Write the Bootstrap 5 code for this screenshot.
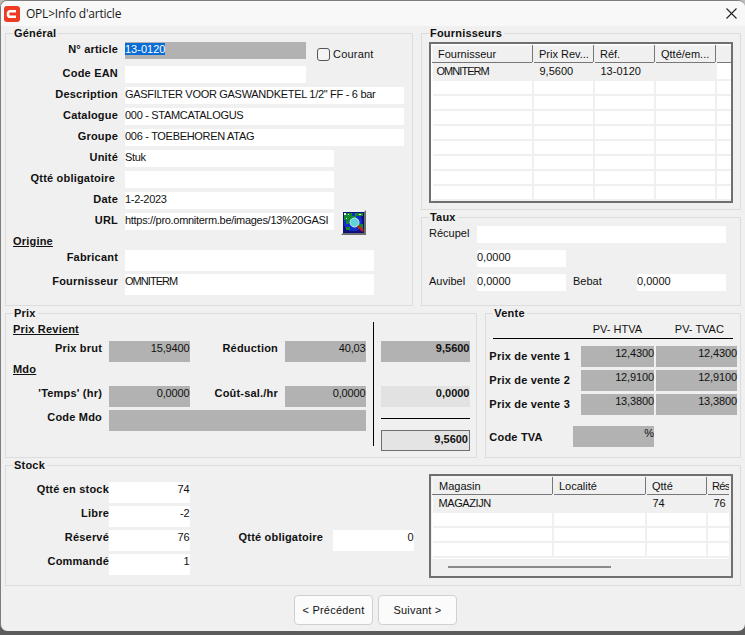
<!DOCTYPE html>
<html lang="fr">
<head>
<meta charset="UTF-8">
<meta name="viewport" content="width=device-width, initial-scale=1.0">
<title>OPL&gt;Info d'article</title>
<link href="https://cdn.jsdelivr.net/npm/bootstrap@5.3.1/dist/css/bootstrap.min.css" rel="stylesheet">
<style>
html, body { height: 100%; }
body { background: linear-gradient(#bdbdbd 0 30px, #5c5c5c 30px); font: 11px/14px "Liberation Sans", Arial, sans-serif; color: #111; overflow: hidden; }
.win { width: 745px; height: 631px; background: #f0f0f0; border: solid #7d7d7d; border-width: 1px 0 0 1px; border-radius: 7px; overflow: hidden; }
.titlebar { height: 25px; background: #f8f8f8; padding-left: 3px; }
.titlebar .ttl { font: 12px/16px "Open Sans", "Liberation Sans", sans-serif; letter-spacing: -.22px; margin-left: 6px; color: #1a1a1a; }
.closex { margin-right: 8px; }
.body-in { padding-left: 4px; }
.grp { border: 1px solid #dcdcdc; margin: 0; padding: 0 7px; }
.grp legend { float: none; width: auto; font: bold 11px/14px "Liberation Sans", sans-serif; letter-spacing: .2px; padding: 0 2px 0 1px; margin: 0; }
.g-gen { width: 408px; height: 280px; }
.g-four { width: 320px; height: 184px; }
.g-taux { width: 320px; height: 96px; }
.g-prix { width: 473px; height: 152px; }
.g-vente { width: 256px; height: 152px; padding: 0 3px; }
.g-vente legend { margin-left: 4px; }
.g-stock { width: 736px; height: 128px; }
.top-row { width: 736px; column-gap: 8px; }
.lbl { font-weight: bold; letter-spacing: .2px; white-space: nowrap; text-align: right; }
.fld { height: 17px; background: #fff; white-space: nowrap; overflow: hidden; line-height: 15px; flex: none; letter-spacing: -.3px; }
.fld.keep { letter-spacing: 0; }
.tall { height: 21px; }
.gris { background: #b2b2b2; }
.num { text-align: right; padding-right: .5px; letter-spacing: -.15px; }
.tight { letter-spacing: -.95px; }
.tight2 { letter-spacing: -.4px; }
.gen-lbl { width: 105px; margin-right: 7px; flex: none; }
.gen-lbl.trail { padding-right: 3px; }
.gen-row { margin-top: 4px; }
.gen-first { margin-top: 2px; height: 17px; }
.gen-ean { margin-top: 7px; }
.w181 { width: 181px; }
.w209 { width: 209px; }
.w249 { width: 249px; }
.w279 { width: 279px; }
.w89 { width: 89px; }
.w81 { width: 81px; }
.w73 { width: 73px; }
.w257 { width: 257px; }
.selt { background: #0a6cd6; color: #fff; letter-spacing: 0; }
.chk.form-check-input { width: 13px; height: 13px; margin: 6px 3px 0 11px; border: 1px solid #555; border-radius: 3px; background-color: #f4f4f4; flex: none; }
.chk-txt { margin-top: 5px; letter-spacing: .2px; }
.urlbtn { width: 25px; height: 25px; margin: -3px 0 -5px 7px; flex: none; background: #d9d9d9; border: 2px solid; border-color: #f2f2f2 #6e6e6e #6e6e6e #f2f2f2; display: block; }
.sect { font-weight: bold; text-decoration: underline; letter-spacing: .2px; }
.origine { margin-top: 4px; }
.fab-row { margin-top: 2px; }
.listbox { border: 2px solid #6f6f6f; background: #fff; overflow: hidden; }
.lb-four { width: 304px; height: 161px; margin-top: 2px; padding: 1px; }
.lb-stock { width: 304px; height: 104px; padding: 1px; margin-left: 15px; margin-top: 2px; background: #f0f0f0; }
.lb-scrollarea { height: 82px; overflow: hidden; margin-right: 1px; background: #fff; }
.gridt { border-collapse: collapse; table-layout: fixed; }
.gridt-four { width: 288px; }
.gridt-stock { width: 297px; }
.c100 { width: 100px; }
.c120 { width: 120px; }
.c93 { width: 93px; }
.c61 { width: 61px; }
.c23 { width: 23px; }
.c35 { width: 35px; }
.gridt th { height: 17px; font-weight: normal; padding: 0 0 0 6px; background: #f0f0f0; border: 1px solid; border-color: #f8f8f8 #777 #777 #f8f8f8; white-space: nowrap; overflow: hidden; }
.gridt td { height: 15px; line-height: 1px; padding: 0 0 0 6px; border-right: 2px solid #f0f0f0; border-bottom: 2px solid #f0f0f0; white-space: nowrap; }
.gridt tr.hl td { height: 17px; line-height: 14px; background: #f0f0f0; border-color: #f0f0f0; }
.gridt-four tr.hl td:last-child { background: #fff; }
.gridt-four th:first-child { padding-left: 5px; }
.gridt-four td:first-child { padding-left: 4px; }
.gridt-stock th:last-child { border-right: 0; padding-left: 5px; letter-spacing: -.7px; }
.gridt-stock td:last-child { border-right: 0; }
.hscroll { height: 19px; background: #f0f0f0; padding: 7px 0 0 16px; }
.hthumb { width: 163px; height: 2px; background: #8a8a8a; }
.prix-left { width: 353px; flex: none; }
.prix-sect { margin-top: 2px; }
.prix-row { margin-top: 5px; }
.prix-row2 { margin-top: 10px; }
.plbl1 { width: 96px; padding-right: 7px; }
.plbl2 { width: 95px; padding-right: 7px; }
.vline { width: 1px; height: 124px; margin: 2px 7px 0 7px; background: #000; flex: none; }
.prix-right { padding-top: 21px; }
.bold-r { font-weight: bold; letter-spacing: 0; }
.pale { background: #e2e2e2; margin-top: 24px; }
.hr-blk { height: 1px; background: #000; margin-top: 11px; }
.total { height: 21px; width: 89px; margin-top: 11px; background: #e4e4e4; border: 1px solid #6f6f6f; line-height: 17px; padding-right: 1px; text-align: right; font-weight: bold; }
.vhead { width: 240px; height: 17px; border-bottom: 1px solid #000; margin: 2px 0 0 4px; }
.vspace { width: 83px; flex: none; }
.vcol { text-align: center; width: 82px; line-height: 14px; flex: none; }
.vlbl { width: 92px; line-height: 21px; flex: none; }
.vrow { margin-top: 3px; }
.vfirst { margin-top: 7px; }
.vgap { margin-left: 2px; }
.vtva { margin-top: 11px; }
.vtva-lbl { width: 84px; line-height: 22px; flex: none; }
.taux-lbl { width: 48px; flex: none; }
.taux-first { margin-top: 2px; }
.taux-row { margin-top: 7px; }
.bebat { width: 64px; margin-left: 7px; flex: none; }
.stock-grid { display: grid; grid-template-columns: 96px 81px 133px 91px; row-gap: 3px; margin-top: 10px; align-content: start; }
.stock-grid .lbl { line-height: 15px; }
.st-right { margin-left: 10px; }
.btn-wiz { width: 79px; height: 30px; padding: 0; font: 11px "Liberation Sans", sans-serif; letter-spacing: .2px; background: #fbfbfb; border: 1px solid #d0d0d0; border-radius: 4px; color: #111; }
.foot { margin-top: 9px; gap: 5px; width: 741px; }
</style>
</head>
<body>
<div class="win">
  <div class="titlebar d-flex align-items-center">
    <svg width="16" height="16" viewBox="0 0 16 16">
      <rect width="16" height="16" rx="3" fill="#ee3b24"/>
      <path d="M12 5.2H6.4C5 5.2 4 6.2 4 7.6v.8c0 1.4 1 2.4 2.4 2.4H12" fill="none" stroke="#fff" stroke-width="2.6"/>
    </svg>
    <span class="ttl">OPL&gt;Info d'article</span>
    <svg class="ms-auto closex" width="11" height="11" viewBox="0 0 11 11"><path d="M.5.5l10 10M10.5.5l-10 10" stroke="#222" stroke-width="1.1" fill="none"/></svg>
  </div>

  <div class="body-in">
    <div class="d-flex top-row">
      <fieldset class="grp g-gen">
        <legend>Général</legend>
        <div class="d-flex gen-first">
          <div class="lbl gen-lbl">N° article</div>
          <div class="fld gris w181"><span class="selt">13-0120</span></div>
          <input class="form-check-input chk" type="checkbox" aria-label="Courant">
          <span class="chk-txt">Courant</span>
        </div>
        <div class="d-flex gen-ean"><div class="lbl gen-lbl">Code EAN</div><div class="fld w181"></div></div>
        <div class="d-flex gen-row"><div class="lbl gen-lbl">Description</div><div class="fld w279">GASFILTER VOOR GASWANDKETEL 1/2" FF - 6 bar</div></div>
        <div class="d-flex gen-row"><div class="lbl gen-lbl">Catalogue</div><div class="fld w279">000 - STAMCATALOGUS</div></div>
        <div class="d-flex gen-row"><div class="lbl gen-lbl">Groupe</div><div class="fld w279">006 - TOEBEHOREN ATAG</div></div>
        <div class="d-flex gen-row"><div class="lbl gen-lbl">Unité</div><div class="fld w209">Stuk</div></div>
        <div class="d-flex gen-row"><div class="lbl gen-lbl trail">Qtté obligatoire</div><div class="fld w209"></div></div>
        <div class="d-flex gen-row"><div class="lbl gen-lbl">Date</div><div class="fld w209">1-2-2023</div></div>
        <div class="d-flex gen-row">
          <div class="lbl gen-lbl">URL</div>
          <div class="fld w209">https://pro.omniterm.be/images/13%20GASI</div>
          <svg class="urlbtn" viewBox="0 0 21 21" shape-rendering="crispEdges">
            <rect width="21" height="21" fill="#10107a"/>
            <circle cx="10" cy="10" r="9.5" fill="#1230c8"/>
            <path d="M1 1h8v3h4v2H9v3H6v3H3V8H1zM12 1h8v3h-8zM15 12h5v5h-5zM3 15h4v3H3z" fill="#128a30"/>
            <path d="M1 1h2v2H1zM5 2h1v1H5zM16 2h2v1h-2zM3 6h1v1H3z" fill="#eee"/>
            <circle cx="11.5" cy="10.5" r="4.5" fill="#5fd4d8" stroke="#c8f0f0" stroke-width="1" shape-rendering="auto"/>
            <path d="M15 14l5 5" stroke="#d81818" stroke-width="2.4" shape-rendering="auto"/>
          </svg>
        </div>
        <div class="sect origine">Origine</div>
        <div class="d-flex fab-row"><div class="lbl gen-lbl">Fabricant</div><div class="fld tall w249"></div></div>
        <div class="d-flex vrow"><div class="lbl gen-lbl">Fournisseur</div><div class="fld tall w249 tight">OMNITERM</div></div>
      </fieldset>

      <div class="d-flex flex-column">
        <fieldset class="grp g-four">
          <legend>Fournisseurs</legend>
          <div class="listbox lb-four">
            <table class="gridt gridt-four">
              <colgroup><col class="c100"><col class="c61"><col class="c61"><col class="c61"><col class="c35"></colgroup>
              <thead><tr><th>Fournisseur</th><th>Prix Rev...</th><th>Réf.</th><th>Qtté/em...</th><th></th></tr></thead>
              <tbody>
                <tr class="hl"><td class="tight">OMNITERM</td><td>9,5600</td><td>13-0120</td><td></td><td></td></tr>
                <tr><td></td><td></td><td></td><td></td><td></td></tr>
                <tr><td></td><td></td><td></td><td></td><td></td></tr>
                <tr><td></td><td></td><td></td><td></td><td></td></tr>
                <tr><td></td><td></td><td></td><td></td><td></td></tr>
                <tr><td></td><td></td><td></td><td></td><td></td></tr>
                <tr><td></td><td></td><td></td><td></td><td></td></tr>
                <tr><td></td><td></td><td></td><td></td><td></td></tr>
                <tr><td></td><td></td><td></td><td></td><td></td></tr>
                <tr><td></td><td></td><td></td><td></td><td></td></tr>
              </tbody>
            </table>
          </div>
        </fieldset>
        <fieldset class="grp g-taux">
          <legend>Taux</legend>
          <div class="d-flex taux-first"><div class="taux-lbl">Récupel</div><div class="fld w249"></div></div>
          <div class="d-flex taux-row"><div class="taux-lbl"></div><div class="fld w89 keep">0,0000</div></div>
          <div class="d-flex taux-row">
            <div class="taux-lbl">Auvibel</div><div class="fld w89 keep">0,0000</div>
            <div class="bebat">Bebat</div><div class="fld w89 keep">0,0000</div>
          </div>
        </fieldset>
      </div>
    </div>

    <div class="d-flex top-row">
      <fieldset class="grp g-prix">
        <legend>Prix</legend>
        <div class="d-flex">
          <div class="prix-left">
            <div class="sect prix-sect">Prix Revient</div>
            <div class="d-flex prix-row">
              <div class="lbl plbl1">Prix brut</div>
              <div class="fld tall gris num w81">15,9400</div>
              <div class="lbl plbl2">Réduction</div>
              <div class="fld tall gris num w81">40,03</div>
            </div>
            <div class="sect">Mdo</div>
            <div class="d-flex prix-row2">
              <div class="lbl plbl1">'Temps' (hr)</div>
              <div class="fld tall gris num w81">0,0000</div>
              <div class="lbl plbl2">Coût-sal./hr</div>
              <div class="fld tall gris num w81">0,0000</div>
            </div>
            <div class="d-flex vrow">
              <div class="lbl plbl1">Code Mdo</div>
              <div class="fld tall gris w257"></div>
            </div>
          </div>
          <div class="vline"></div>
          <div class="w89 prix-right">
            <div class="fld tall gris num bold-r">9,5600</div>
            <div class="fld tall pale num bold-r">0,0000</div>
            <div class="hr-blk"></div>
            <div class="total">9,5600</div>
          </div>
        </div>
      </fieldset>

      <fieldset class="grp g-vente">
        <legend>Vente</legend>
        <div class="vhead d-flex"><div class="vspace"></div><div class="vcol">PV- HTVA</div><div class="vcol">PV- TVAC</div></div>
        <div class="d-flex vfirst"><div class="lbl text-start vlbl">Prix de vente 1</div><div class="fld tall gris num w73">12,4300</div><div class="fld tall gris num w81 vgap">12,4300</div></div>
        <div class="d-flex vrow"><div class="lbl text-start vlbl">Prix de vente 2</div><div class="fld tall gris num w73">12,9100</div><div class="fld tall gris num w81 vgap">12,9100</div></div>
        <div class="d-flex vrow"><div class="lbl text-start vlbl">Prix de vente 3</div><div class="fld tall gris num w73">13,3800</div><div class="fld tall gris num w81 vgap">13,3800</div></div>
        <div class="d-flex vtva"><div class="lbl text-start vtva-lbl">Code TVA</div><div class="fld tall gris num w81">%</div></div>
      </fieldset>
    </div>

    <fieldset class="grp g-stock">
      <legend>Stock</legend>
      <div class="d-flex">
        <div class="stock-grid">
          <div class="lbl">Qtté en stock</div><div class="fld tall num">74</div><div></div><div></div>
          <div class="lbl">Libre</div><div class="fld tall num">-2</div><div></div><div></div>
          <div class="lbl">Réservé</div><div class="fld tall num">76</div><div class="lbl">Qtté obligatoire</div><div class="fld tall num st-right">0</div>
          <div class="lbl">Commandé</div><div class="fld tall num">1</div><div></div><div></div>
        </div>
        <div class="listbox lb-stock">
          <div class="lb-scrollarea">
            <table class="gridt gridt-stock">
              <colgroup><col class="c120"><col class="c93"><col class="c61"><col class="c23"></colgroup>
              <thead><tr><th>Magasin</th><th>Localité</th><th>Qtté</th><th>Rés</th></tr></thead>
              <tbody>
                <tr class="hl"><td class="tight2">MAGAZIJN</td><td></td><td>74</td><td>76</td></tr>
                <tr><td></td><td></td><td></td><td></td></tr>
                <tr><td></td><td></td><td></td><td></td></tr>
                <tr><td></td><td></td><td></td><td></td></tr>
              </tbody>
            </table>
          </div>
          <div class="hscroll"><div class="hthumb"></div></div>
        </div>
      </div>
    </fieldset>

    <div class="d-flex justify-content-center foot">
      <button type="button" class="btn btn-wiz">&lt; Précédent</button>
      <button type="button" class="btn btn-wiz">Suivant &gt;</button>
    </div>
  </div>
</div>
<script src="https://cdn.jsdelivr.net/npm/bootstrap@5.3.1/dist/js/bootstrap.bundle.min.js"></script>
</body>
</html>
